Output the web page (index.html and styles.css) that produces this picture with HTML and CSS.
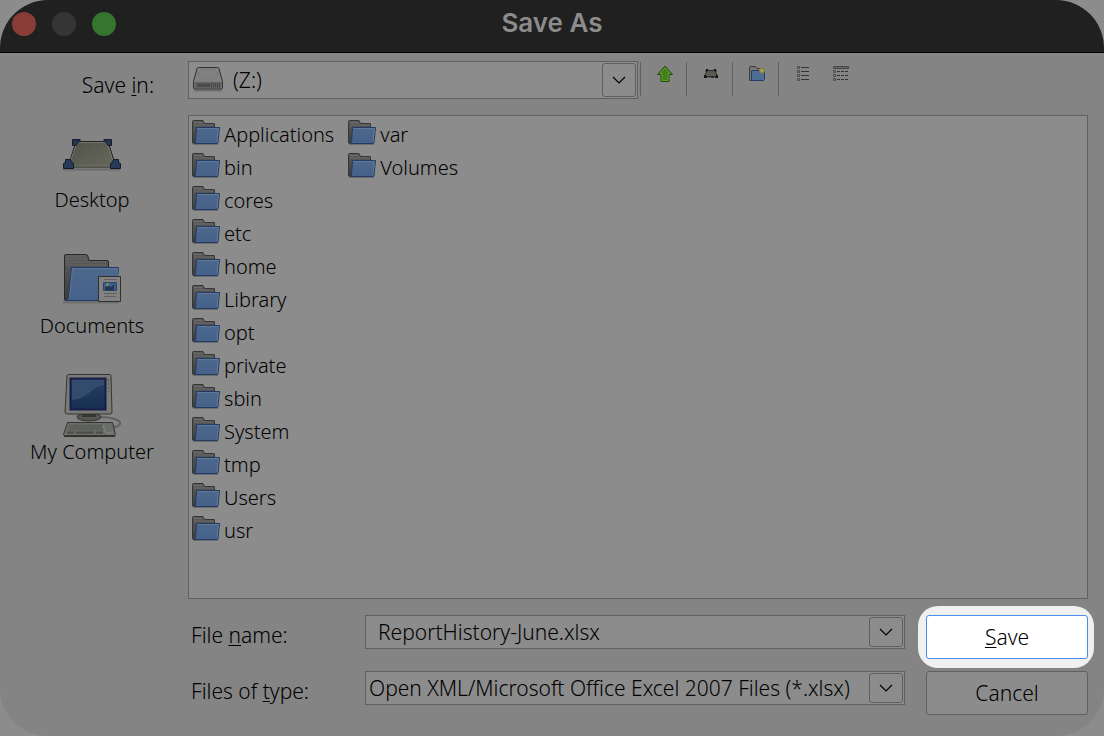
FILE: index.html
```
<!DOCTYPE html>
<html lang="en">
<head>
    <meta charset="UTF-8">
    <meta name="viewport" content="width=device-width, initial-scale=1.0">
    <title>Save As</title>
    <link rel="stylesheet" href="styles.css">
</head>
<body>
    <!-- Shared icons -->
    <svg class="sprite" aria-hidden="true">
        <defs>
            <linearGradient id="blue" x1="0" y1="0" x2="0" y2="1">
                <stop offset="0" stop-color="#4d688c"/>
                <stop offset="1" stop-color="#46618a"/>
            </linearGradient>
            <linearGradient id="dark" x1="0" y1="0" x2="0" y2="1">
                <stop offset="0" stop-color="#5c5c5c"/>
                <stop offset="1" stop-color="#3c3c3c"/>
            </linearGradient>
            <linearGradient id="mat" x1="0" y1="0" x2="1" y2="1">
                <stop offset="0" stop-color="#505148"/>
                <stop offset="1" stop-color="#686a5e"/>
            </linearGradient>
            <linearGradient id="screen" x1="0" y1="0" x2="0" y2="1">
                <stop offset="0" stop-color="#263f60"/>
                <stop offset="1" stop-color="#172f52"/>
            </linearGradient>
        </defs>
        <symbol id="folder" viewBox="0 0 28 25">
            <path d="M1 24.5h25" stroke="#6c6c6c" fill="none"/>
            <path d="M.5 23V1.500Q.5.5 1.500.5H11l1.500 3H22q.5 0 .5.500V20L3 23.500z" fill="url(#dark)" stroke="#353535"/>
            <path d="M2 2.500h8.500M2 5h19.500" stroke="#6b6b6b" fill="none"/>
            <path d="M4.500 7.500h23L26 22.500q0 1-1 1H2.500q1-1 1-2z" fill="url(#blue)" stroke="#223b63"/>
            <path d="M5.500 8.500h20.800L25 22" stroke="#64799a" fill="none"/>
        </symbol>
        <symbol id="chevron" viewBox="0 0 14 8">
            <path d="M1 1l6 6 6-6" fill="none" stroke="#000" stroke-width="1.200"/>
        </symbol>
    </svg>

    <div class="window">
        <header class="titlebar">
            <div class="lights">
                <button class="light close" aria-label="Close"></button>
                <button class="light minimize" aria-label="Minimize" disabled></button>
                <button class="light zoom" aria-label="Zoom"></button>
            </div>
            <h1>Save As</h1>
        </header>

        <main class="dialog">
            <label class="save-in" for="drive">Save <u>i</u>n:</label>

            <div class="top-row">
                <div class="combo drive">
                    <svg width="32" height="26" viewBox="0 0 32 26" aria-hidden="true">
                        <path d="M2 24.500h28" stroke="#707070" stroke-width="2"/>
                        <path d="M6.500 1.500h19q1 0 1.500 1l3.500 13v6.500q0 1-1 1h-27q-1 0-1-1v-6.500L5 2.500q.5-1 1.500-1z" fill="#7b7b7b" stroke="#333"/>
                        <path d="M6.500 2.500h19l4 13h-27z" fill="#828282"/>
                        <ellipse cx="16" cy="8.500" rx="10" ry="5.500" fill="#808080" stroke="#7a7a7a"/>
                        <path d="M2.500 16h27v6h-27z" fill="#636363"/>
                        <path d="M5 17.500h13v3.500H5z" fill="#4b4b4b"/>
                        <path d="M19.500 17v4.500m2-4.500v4.500m2-4.500v4.500m2-4.500v4.500m2-4.500v4.500" stroke="#484848"/>
                    </svg>
                    <select id="drive"><option>(Z:)</option></select>
                    <span class="arrow"><svg width="14" height="8"><use href="#chevron"/></svg></span>
                </div>
                <div class="toolbar">
                    <button class="tool" aria-label="Up one level">
                        <svg width="18" height="18" viewBox="0 0 18 18">
                            <path d="M9 1l7.500 8.500H13v7H5v-7H1.500z" fill="#428017" stroke="#214d0b"/>
                            <path d="M9 2.700l5 5.800h-2v7H6v-7H4z" fill="none" stroke="#629a35"/>
                        </svg>
                    </button>
                    <button class="tool" aria-label="Desktop">
                        <svg width="18" height="18" viewBox="0 0 18 18">
                            <path d="M5 5.500h8l2.500 6h-13z" fill="#5a5c54" stroke="#2c2c2a"/>
                            <path d="M2 12v-2h1.500l2 3H2zm14 0v-2h-1.500l-2 3H16zM4 4h2.500L4.500 7H3.500zm10 0h-2.500l2 3h1z" fill="#10141b"/>
                            <path d="M6 12.500h3" stroke="#706819"/>
                            <path d="M9 12.500h3" stroke="#1c315b"/>
                        </svg>
                    </button>
                    <button class="tool" aria-label="New folder">
                        <svg width="18" height="18" viewBox="0 0 18 18">
                            <path d="M1.500 15.500v-13q0-1 1-1h5l1.500 2h4.500v12z" fill="#777" stroke="#3b3b3b"/>
                            <path d="M3.500 5.500h13v9l-1 1h-12z" fill="#4f6c94" stroke="#243e66"/>
                            <circle cx="14" cy="5.500" r="3" fill="#8c8238"/>
                            <circle cx="14" cy="5.500" r="1.500" fill="#aaa580"/>
                        </svg>
                    </button>
                    <div class="views">
                        <button class="tool" aria-label="List view">
                            <svg width="14" height="18" viewBox="0 0 14 18">
                                <path d="M1.500 1.500h2v2h-2zm0 4h2v2h-2zm0 4h2v2h-2zm0 4h2v2h-2z" fill="#777" stroke="#505050"/>
                                <path d="M5 2.500h8M5 6.500h8M5 10.500h8M5 14.500h8" stroke="#333"/>
                            </svg>
                        </button>
                        <button class="tool" aria-label="Details view">
                            <svg width="18" height="18" viewBox="0 0 18 18">
                                <path d="M1.500 1.500h15v2h-15z" fill="#686868" stroke="#484848"/>
                                <path d="M1.500 5.500h2v2h-2zm0 4h2v2h-2zm0 4h2v2h-2z" fill="#777" stroke="#505050"/>
                                <path d="M5 6.500h12M5 10.500h12M5 14.500h12" stroke="#333" stroke-dasharray="3 1"/>
                            </svg>
                        </button>
                    </div>
                </div>
            </div>

            <nav class="places">
                <button class="place">
                    <svg width="64" height="64" viewBox="0 0 64 64" aria-hidden="true">
                        <path d="M3 47.500h57" stroke="#6b6b6b" stroke-width="2"/>
                        <path d="M16 19.500h32l8 25.500H8z" fill="url(#mat)" stroke="#20231f"/>
                        <path d="M17 20.500h30l7 22-2 1.500H11l-1.500-2z" fill="none" stroke="#74766c"/>
                        <path d="M12.500 17.500h7.500v2q-3 0-4 4h-3.500zM51.500 17.500H44v2q3 0 4 4h3.500z" fill="#26364f" stroke="#101b2c"/>
                        <path d="M3.500 46.500v-5q1-1 2-1v-3h5q1 4 3 4v5zM60.500 46.500v-5q-1-1-2-1v-3h-5q-1 4-3 4v5z" fill="#283a59" stroke="#101b2c"/>
                    </svg>
                    Desktop
                </button>
                <button class="place">
                    <svg width="64" height="64" viewBox="0 0 64 64" aria-hidden="true">
                        <path d="M3 54h56" stroke="#707070" stroke-width="3"/>
                        <path d="M4.500 52V8q0-1.500 1.500-1.500h20q1.500 0 2 2l1 4h18q1.500 0 1.500 1.500v37z" fill="url(#dark)" stroke="#292929"/>
                        <path d="M6 8h20.500M6 11h21M6 14h41M6 17h41" stroke="#666"/>
                        <path d="M11.500 19.500h47l-3 33H6q2-1 2.500-3z" fill="url(#blue)" stroke="#203b63"/>
                        <path d="M12.500 20.500h45l-2.500 30M12.500 21l-3 29" fill="none" stroke="#5c7599"/>
                        <path d="M38.500 28.500h22v25h-22z" fill="#828282" stroke="#303030"/>
                        <path d="M44 31.500h13M44 45.500h13M44 48.500h12" stroke="#606060"/>
                        <path d="M43.500 34.500h13v8h-13z" fill="#3e5f8e" stroke="#294669"/>
                        <path d="M45 42v-3l3-1 3 1 3-3v6z" fill="#24364f"/>
                        <path d="M47.500 35v3" stroke="#94914c" stroke-width="2"/>
                    </svg>
                    Documents
                </button>
                <button class="place">
                    <svg width="64" height="64" viewBox="0 0 64 64" aria-hidden="true">
                        <path d="M40 43c11 0 22 3 20 7s-8 3-11 3" fill="none" stroke="#606060" stroke-width="2"/>
                        <ellipse cx="29" cy="43" rx="12" ry="4" fill="#555752" stroke="#303230"/>
                        <path d="M22 40h14v3H22z" fill="#343634"/>
                        <path d="M8.500.5h41q1.500 0 1.500 1.500l1 36q0 2-2 2H7q-2 0-2-2l2-36q0-1.500 1.500-1.500z" fill="#7a7b76" stroke="#343532"/>
                        <path d="M10.500 4.500h35v31h-35z" fill="url(#screen)" stroke="#181c49" stroke-width="2"/>
                        <path d="M12 6h32v5C29 14 30 24 12 26z" fill="#344c6c"/>
                        <path d="M48.500 5v13" stroke="#55554f" stroke-dasharray="2 2"/>
                        <path d="M7.500 48.500h45l3 12q0 1-1 1h-50q-1 0-1-1z" fill="#6b6d69" stroke="#343532"/>
                        <path d="M9 50.500h33l1 6H8z" fill="#5d5f5b"/>
                        <path d="M7 58.500h7m2 0h18m2 0h7" stroke="#4a4c48" stroke-width="2"/>
                        <path d="M43 51l3 8h7" stroke="#858781" fill="none"/>
                        <path d="M4 62.500h51" stroke="#303030"/>
                    </svg>
                    My Computer
                </button>
            </nav>

            <ul class="files">
                <li><svg><use href="#folder"/></svg>Applications</li>
                <li><svg><use href="#folder"/></svg>bin</li>
                <li><svg><use href="#folder"/></svg>cores</li>
                <li><svg><use href="#folder"/></svg>etc</li>
                <li><svg><use href="#folder"/></svg>home</li>
                <li><svg><use href="#folder"/></svg>Library</li>
                <li><svg><use href="#folder"/></svg>opt</li>
                <li><svg><use href="#folder"/></svg>private</li>
                <li><svg><use href="#folder"/></svg>sbin</li>
                <li><svg><use href="#folder"/></svg>System</li>
                <li><svg><use href="#folder"/></svg>tmp</li>
                <li><svg><use href="#folder"/></svg>Users</li>
                <li><svg><use href="#folder"/></svg>usr</li>
                <li><svg><use href="#folder"/></svg>var</li>
                <li><svg><use href="#folder"/></svg>Volumes</li>
            </ul>

            <form class="fields">
                <label for="file-name">File <u>n</u>ame:</label>
                <div class="combo name">
                    <input type="text" id="file-name" value="ReportHistory-June.xlsx" autocomplete="off">
                    <button type="button" class="arrow" aria-label="Recent names"><svg width="14" height="8"><use href="#chevron"/></svg></button>
                </div>
                <button type="submit" class="btn save"><span><u>S</u>ave</span></button>

                <label for="file-type">Files of <u>t</u>ype:</label>
                <div class="combo">
                    <select id="file-type"><option>Open XML/Microsoft Office Excel 2007 Files (*.xlsx)</option></select>
                    <span class="arrow"><svg width="14" height="8"><use href="#chevron"/></svg></span>
                </div>
                <button type="button" class="btn">Cancel</button>
            </form>
        </main>
    </div>
</body>
</html>
```
FILE: styles.css
```
* {
    box-sizing: border-box;
}

body {
    margin: 0;
    background: #8c8c8c;
    color: #000;
    font-family: "Noto Sans", sans-serif;
    font-size: 20px;
    font-weight: 300;
    line-height: 28px;
}

button, input, select {
    margin: 0;
    padding: 0;
    border: none;
    background: none;
    color: inherit;
    font: inherit;
}

svg {
    display: block;
    flex: none;
}

u {
    text-decoration-thickness: 1px;
    text-underline-offset: 2px;
}

.sprite {
    position: absolute;
    width: 0;
    height: 0;
}

.window {
    display: flex;
    flex-direction: column;
    min-height: 100vh;
    border-radius: 48px;
    overflow: hidden;
    background: #848484;
}

.titlebar {
    display: grid;
    grid-template-columns: 1fr auto 1fr;
    align-items: center;
    height: 53px;
    padding: 0 12px 5px;
    background: #202020;
    border-bottom: 1px solid #000;
}

.titlebar h1 {
    margin: 0;
    padding-bottom: 2px;
    color: #8c8c8c;
    font-family: Inter, sans-serif;
    font-size: 26px;
    font-weight: 600;
}

.lights {
    display: flex;
    gap: 16px;
}

.light {
    width: 24px;
    height: 24px;
    border-radius: 50%;
}

.close { background: #893c35; }
.minimize { background: #353535; }
.zoom { background: #357530; }

.dialog {
    flex: 1;
    display: grid;
    grid-template-columns: 188px 1fr;
    grid-template-rows: 38px 1fr auto;
    row-gap: 16px;
    padding: 8px 16px 21px 0;
}

.save-in {
    padding: 10px 34px 0 0;
    font-size: 21px;
    text-align: right;
}

.top-row {
    display: flex;
    gap: 2px;
}

.combo {
    display: flex;
    align-items: center;
    height: 34px;
    padding: 1px;
    background: #8c8c8c;
    border: 1px solid #606060;
}

.combo input,
.combo select {
    flex: 1;
    min-width: 0;
    height: 100%;
    padding-left: 2px;
    font-size: 21px;
    appearance: none;
    outline: none;
}

.combo.name input {
    padding-left: 11px;
}

.combo.drive {
    flex: 0 1 450px;
    height: 38px;
    padding-left: 3px;
}

.combo.drive > svg {
    margin-bottom: 2px;
}

.combo.drive select {
    padding-left: 9px;
}

.arrow {
    display: flex;
    align-items: center;
    justify-content: center;
    width: 34px;
    height: 100%;
    border: 1px solid #606060;
    border-radius: 3px;
}

/* keep clicks on the select below the painted arrow */
.combo select + .arrow {
    margin-left: -34px;
    pointer-events: none;
}

.toolbar {
    display: flex;
    height: 34px;
    margin-top: 1px;
}

.toolbar > * {
    width: 46px;
    height: 34px;
    padding: 3px 0 0 15px;
    border-left: 1px solid #606060;
}

.tool {
    display: flex;
    align-items: flex-start;
}

.toolbar .views {
    display: flex;
    gap: 22px;
    width: auto;
    padding-left: 17px;
}

.places {
    display: flex;
    flex-direction: column;
    align-items: center;
    gap: 34px;
    padding: 7px 4px 0 0;
}

.place {
    display: flex;
    flex-direction: column;
    align-items: center;
}

.files {
    display: flex;
    flex-flow: column wrap;
    align-content: flex-start;
    column-gap: 14px;
    height: 484px;
    margin: 0;
    padding: 2px 3px 50px;
    list-style: none;
    background: #8c8c8c;
    border: 1px solid #606060;
}

.files li {
    display: flex;
    align-items: center;
    gap: 4px;
    height: 33px;
}

.files svg {
    width: 28px;
    height: 25px;
    margin-bottom: 5px;
}

.fields {
    grid-column: 2;
    display: grid;
    grid-template-columns: 174px 1fr 162px;
    row-gap: 12px;
    padding-left: 3px;
}

.fields label {
    padding-top: 6px;
    font-size: 21px;
}

.fields .combo {
    margin-right: 21px;
}

.btn {
    height: 44px;
    background: #8c8c8c;
    border: 1px solid #606060;
    border-radius: 3px;
    font-size: 21px;
}

.save {
    position: relative;
    z-index: 1;
    border: none;
}

/* highlight ring around the default button */
.save::before {
    content: "";
    position: absolute;
    z-index: -1;
    inset: -9px -6px -9px -8px;
    background: #f0f0f0;
    border-radius: 20px;
}

.save span {
    display: flex;
    align-items: center;
    justify-content: center;
    height: 100%;
    background: #fff;
    border: 1px solid #4a90e8;
    border-radius: 3px;
}
```
